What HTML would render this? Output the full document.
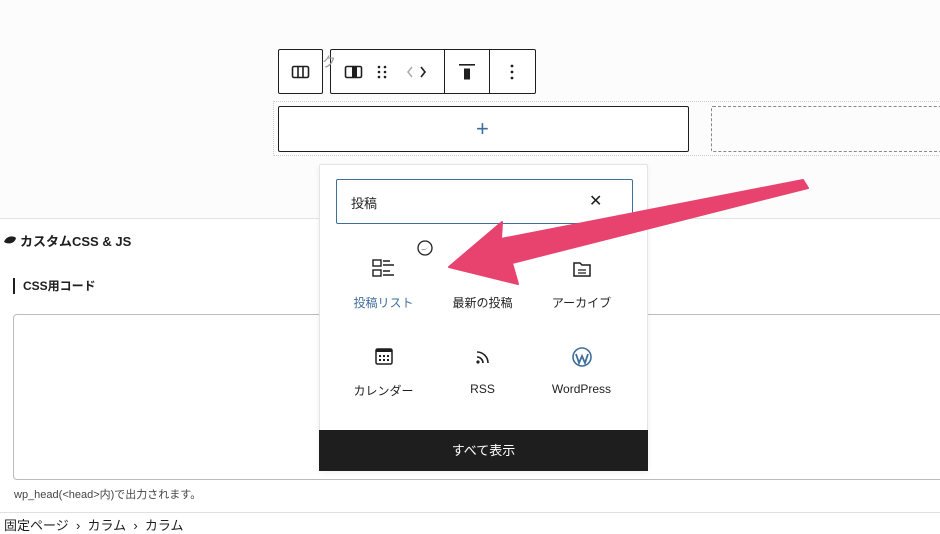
<!DOCTYPE html>
<html><head><meta charset="utf-8"><style>
*{box-sizing:border-box;margin:0;padding:0}
body{width:940px;height:529px;overflow:hidden;background:#fff;font-family:"Liberation Sans","Noto Sans CJK JP",sans-serif;position:relative;color:#1e1e1e}
.abs{position:absolute}
.top{left:0;top:0;width:940px;height:219px;background:#fcfcfc;border-bottom:1px solid #e2e2e2}
.tb{background:#fff;border:1px solid #1e1e1e;border-radius:2px}
.lbl{font-size:12px;text-align:center;width:99px}
</style></head><body>
<div class="abs top"></div>
<div class="abs tb" style="left:278px;top:49px;width:45px;height:45px"></div>
<svg class="abs" style="left:290px;top:63px" width="22" height="18" viewBox="0 0 22 18"><rect x="2.5" y="3.5" width="16" height="11" rx="1.5" fill="none" stroke="#1e1e1e" stroke-width="1.6"/><path d="M8 4v10M13 4v10" stroke="#1e1e1e" stroke-width="1.6"/></svg>
<div class="abs tb" style="left:330px;top:49px;width:206px;height:45px"></div>
<div class="abs" style="left:444px;top:50px;width:1px;height:43px;background:#1e1e1e"></div>
<div class="abs" style="left:489px;top:50px;width:1px;height:43px;background:#1e1e1e"></div>
<svg class="abs" style="left:343px;top:63px" width="22" height="18" viewBox="0 0 22 18"><rect x="2.5" y="3.5" width="16" height="11" rx="1.5" fill="none" stroke="#1e1e1e" stroke-width="1.6"/><rect x="9" y="4" width="5" height="10" fill="#1e1e1e"/></svg>
<svg class="abs" style="left:374px;top:62px" width="16" height="20"><g fill="#1e1e1e"><circle cx="5" cy="5" r="1.3"/><circle cx="11" cy="5" r="1.3"/><circle cx="5" cy="10" r="1.3"/><circle cx="11" cy="10" r="1.3"/><circle cx="5" cy="15" r="1.3"/><circle cx="11" cy="15" r="1.3"/></g></svg>
<svg class="abs" style="left:402px;top:62px" width="28" height="20"><path d="M10 5l-4 5 4 5" fill="none" stroke="#aaa" stroke-width="1.5"/><path d="M19 5l4 5-4 5" fill="none" stroke="#1e1e1e" stroke-width="1.6"/></svg>
<svg class="abs" style="left:456px;top:61px" width="22" height="22"><rect x="3" y="3" width="16" height="1.6" fill="#1e1e1e"/><rect x="8" y="7.5" width="6" height="11" fill="#1e1e1e"/></svg>
<svg class="abs" style="left:506px;top:61px" width="12" height="22"><g fill="#1e1e1e"><circle cx="6" cy="5" r="1.4"/><circle cx="6" cy="11" r="1.4"/><circle cx="6" cy="17" r="1.4"/></g></svg>
<div class="abs" style="left:322px;top:52px;font-size:14px;color:#999">ク</div>
<div class="abs" style="left:273px;top:101px;width:680px;height:55px;border:1px dotted #ccc"></div>
<div class="abs" style="left:278px;top:106px;width:411px;height:46px;border:1px solid #1e1e1e;border-radius:2px;background:#fff"></div>
<div class="abs" style="left:476px;top:116px;font-size:22px;color:#3e6e9c;font-weight:300">+</div>
<div class="abs" style="left:711px;top:106px;width:240px;height:46px;border:1px dashed #888;border-radius:2px"></div>
<svg class="abs" style="left:3px;top:234px" width="14" height="12"><path d="M1 8c2-6 9-7 12-4-1 5-7 7-12 4z" fill="#1e1e1e"/></svg>
<div class="abs" style="left:20px;top:231px;font-size:13px;font-weight:bold">カスタムCSS &amp; JS</div>
<div class="abs" style="left:13px;top:278px;width:2px;height:16px;background:#1e1e1e"></div>
<div class="abs" style="left:23px;top:277px;font-size:12px;font-weight:bold">CSS用コード</div>
<div class="abs" style="left:13px;top:314px;width:940px;height:166px;border:1px solid #bbb;border-radius:4px"></div>
<div class="abs" style="left:14px;top:486px;font-size:11px;color:#444">wp_head(&lt;head&gt;内)で出力されます。</div>
<div class="abs" style="left:0;top:512px;width:940px;height:1px;background:#e0e0e0"></div>
<div class="abs" style="left:4px;top:515px;font-size:13px">固定ページ &nbsp;›&nbsp; カラム &nbsp;›&nbsp; カラム</div>
<div class="abs" style="left:319px;top:164px;width:329px;height:307px;background:#fff;border:1px solid #e4e4e4;border-radius:2px;box-shadow:0 2px 6px rgba(0,0,0,.06)"></div>
<div class="abs" style="left:336px;top:179px;width:297px;height:45px;border:1.5px solid #3e6e9c;border-radius:2px;background:#fff"></div>
<div class="abs" style="left:351px;top:193px;font-size:13px">投稿</div>
<div class="abs" style="left:589px;top:191px;font-size:16px">✕</div>
<svg class="abs" style="left:371px;top:257px" width="26" height="24"><g fill="none" stroke="#1e1e1e" stroke-width="1.4"><rect x="2" y="3" width="8" height="6"/><rect x="2" y="13" width="8" height="6"/><path d="M12 4h7M12 8h11M12 14h7M12 18h11"/></g></svg>
<svg class="abs" style="left:416px;top:239px" width="18" height="18"><circle cx="9" cy="9" r="7" fill="#fff" stroke="#1e1e1e" stroke-width="1.3"/><path d="M5 10c3 2 6 1 8-4-2 5-5 5-8 4z" fill="#1e1e1e"/></svg>
<svg class="abs" style="left:571px;top:259px" width="22" height="20"><path d="M3 4h6l2 2h8v11H3z" fill="none" stroke="#1e1e1e" stroke-width="1.5"/><path d="M7 11h8M7 14h8" stroke="#1e1e1e" stroke-width="1.3"/></svg>
<div class="abs lbl" style="left:334px;top:294px;color:#3e6e9c">投稿リスト</div>
<div class="abs lbl" style="left:433px;top:294px">最新の投稿</div>
<div class="abs lbl" style="left:532px;top:294px">アーカイブ</div>
<svg class="abs" style="left:373px;top:346px" width="22" height="22"><rect x="3" y="3" width="16" height="15" rx="1.5" fill="none" stroke="#1e1e1e" stroke-width="1.5"/><rect x="3" y="3" width="16" height="3" fill="#1e1e1e"/><g fill="#1e1e1e"><rect x="6" y="9" width="2" height="2"/><rect x="10" y="9" width="2" height="2"/><rect x="14" y="9" width="2" height="2"/><rect x="6" y="13" width="2" height="2"/><rect x="10" y="13" width="2" height="2"/><rect x="14" y="13" width="2" height="2"/></g></svg>
<svg class="abs" style="left:472px;top:346px" width="22" height="22"><circle cx="6" cy="16" r="1.6" fill="#1e1e1e"/><path d="M5 11a6 6 0 0 1 6 6M5 6a11 11 0 0 1 11 11" fill="none" stroke="#1e1e1e" stroke-width="1.6"/></svg>
<svg class="abs" style="left:571px;top:346px" width="22" height="22"><circle cx="11" cy="11" r="9" fill="none" stroke="#3e6e9c" stroke-width="1.6"/><path d="M5 8l3 9 3-7 3 7 3-9" fill="none" stroke="#3e6e9c" stroke-width="1.8"/></svg>
<div class="abs lbl" style="left:334px;top:382px">カレンダー</div>
<div class="abs lbl" style="left:433px;top:382px">RSS</div>
<div class="abs lbl" style="left:532px;top:382px">WordPress</div>
<div class="abs" style="left:319px;top:430px;width:329px;height:41px;background:#1e1e1e;color:#fff;font-size:13px;text-align:center;line-height:41px">すべて表示</div>
<svg class="abs" style="left:0;top:0" width="940" height="529"><polygon points="449,267 502,222 501,239 803,180 808,188 512,263 518,284" fill="#e8436f" stroke="#e8436f" stroke-width="2" stroke-linejoin="round"/></svg>
</body></html>
